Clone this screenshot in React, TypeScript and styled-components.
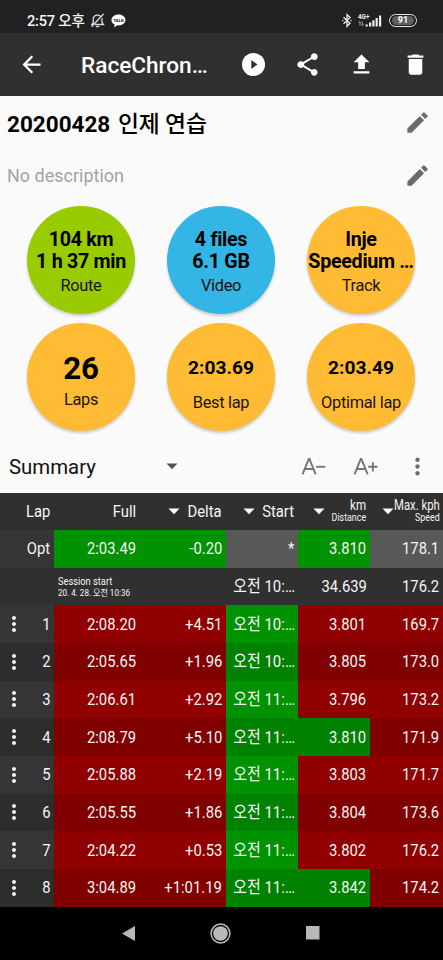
import React from 'react';
import styled, { createGlobalStyle } from 'styled-components';
import { MdArrowBack, MdShare, MdFileUpload, MdDelete, MdEdit, MdMoreVert } from 'react-icons/md';

const GlobalStyle = createGlobalStyle`
  * { box-sizing: border-box; }
  body {
    margin: 0;
    background: #000;
    font-family: Roboto, 'Noto Sans CJK KR', sans-serif;
  }
  svg { display: block; flex: none; }
`;

const Screen = styled.div`
  width: 443px;
  height: 960px;
  display: flex;
  flex-direction: column;
  overflow: hidden;
  background: #fafafa;
`;

const StatusBar = styled.header`
  height: 33px;
  flex: none;
  display: flex;
  align-items: center;
  justify-content: space-between;
  padding: 8px 26px 0 27px;
  background: #212121;
  color: #f4f4f4;
`;

const StatusGroup = styled.div<{ $gap: number }>`
  display: flex;
  align-items: center;
  gap: ${(p) => p.$gap}px;
`;

const Clock = styled.span`
  font-size: 14.6px;
  line-height: 20px;
  font-weight: 500;
  letter-spacing: -0.2px;
  white-space: nowrap;
`;

const Battery = styled.span`
  width: 28px;
  height: 12.5px;
  border: 1.3px solid #e8e8e8;
  border-radius: 7px;
  padding: 1px 2px;
  display: flex;
`;

const BatteryLevel = styled.span`
  flex: 1;
  border-radius: 5px;
  background: #606060;
  color: #fff;
  font-size: 9px;
  font-weight: 700;
  line-height: 8.6px;
  text-align: center;
`;

const AppBar = styled.nav`
  height: 63px;
  flex: none;
  display: flex;
  align-items: center;
  padding: 0 14px 0 18px;
  background: #303030;
  color: #fff;
`;

const AppTitle = styled.h1`
  flex: 1;
  margin: 2px 0 0 36px;
  font-size: 22.6px;
  line-height: 30px;
  font-weight: 500;
  white-space: nowrap;
`;

const Actions = styled.div`
  display: flex;
  gap: 27px;
`;

const Field = styled.div`
  height: 53px;
  flex: none;
  display: flex;
  align-items: center;
  justify-content: space-between;
  padding: 0 12px 0 7px;
  color: #6b6b6b;
`;

const SessionName = styled.h2`
  margin: 2px 0 0;
  font-size: 22.5px;
  line-height: 30px;
  font-weight: 700;
  color: #000;
  white-space: nowrap;
`;

const Korean = styled.span`
  font-family: 'Noto Sans CJK KR', sans-serif;
  font-weight: 500;
  font-size: 22.8px;
  margin-left: 2px;
`;

const Description = styled.span`
  margin-top: 1px;
  font-size: 18px;
  line-height: 24px;
  color: #a3a3a3;
`;

const Circles = styled.section`
  display: grid;
  grid-template-columns: repeat(3, 108px);
  grid-template-rows: repeat(2, 108px);
  gap: 9px 32px;
  padding: 4px 0 0 27px;
  height: 237px;
  flex: none;
`;

const Circle = styled.div<{ $color: string }>`
  width: 108px;
  height: 108px;
  border-radius: 50%;
  background: ${(p) => p.$color};
  box-shadow: 0 2px 3px rgba(0, 0, 0, 0.2);
  display: flex;
  flex-direction: column;
  align-items: center;
  color: #000;
  white-space: nowrap;
`;

const CircleValue = styled.div<{ $size: number; $top: number; $line: number; $track: number }>`
  margin-top: ${(p) => p.$top}px;
  font-size: ${(p) => p.$size}px;
  line-height: ${(p) => p.$line}px;
  letter-spacing: ${(p) => p.$track}px;
  font-weight: 700;
  text-align: center;
  white-space: pre;
`;

const CircleLabel = styled.div<{ $top: number }>`
  margin-top: ${(p) => p.$top}px;
  font-size: 16.4px;
  letter-spacing: -0.3px;
  line-height: 20px;
  color: #1c1408;
`;

const Toolbar = styled.div`
  height: 53.5px;
  flex: none;
  display: flex;
  align-items: center;
  padding: 2px 12px 0 9px;
  color: #6b6b6b;
`;

const Picker = styled.div`
  width: 169px;
  display: flex;
  align-items: center;
  justify-content: space-between;
  color: #111;
  font-size: 20.4px;
  line-height: 28px;
`;

const FontButtons = styled.div`
  flex: 1;
  display: flex;
  justify-content: flex-end;
  gap: 27px;
  margin-right: 26px;
`;

const Table = styled.main`
  flex: none;
  height: 414px;
  display: grid;
  grid-template-rows: repeat(11, 1fr);
  background: #303030;
  color: #f5f5f5;
`;

const Row = styled.div`
  display: grid;
  grid-template-columns: 54px 85.5px 86px 72.5px 72px 73px;
`;

const Cell = styled.div<{ $bg?: string }>`
  display: flex;
  align-items: center;
  justify-content: flex-end;
  padding-right: 3.5px;
  background: ${(p) => p.$bg ?? 'transparent'};
  min-width: 0;
`;

const LapCell = styled(Cell)`
  justify-content: space-between;
  padding-left: 2px;
`;

const Narrow = styled.span<{ $size?: number; $scale?: number }>`
  display: block;
  flex: none;
  font-size: ${(p) => p.$size ?? 17.2}px;
  line-height: 20px;
  margin-top: -1px;
  white-space: nowrap;
  transform: scaleX(${(p) => p.$scale ?? 0.86});
  transform-origin: right center;
`;

const SortableCell = styled(Cell)<{ $inset: number }>`
  justify-content: space-between;
  padding-left: ${(p) => p.$inset}px;
`;

const HeaderLabel = styled.div`
  flex: 1;
  min-width: 0;
  display: flex;
  justify-content: flex-end;
`;

const TwoLine = styled(HeaderLabel)`
  flex-direction: column;
  align-items: flex-end;
  & > span { margin: 0; }
  & > span:first-child { line-height: 13px; }
  & > span:last-child { line-height: 12px; }
`;

const SessionCell = styled(Cell)`
  grid-column: 2 / 4;
  flex-direction: column;
  align-items: flex-start;
  justify-content: center;
  padding-left: 4px;
  & > span {
    margin: 0;
    line-height: 11px;
    transform-origin: left center;
  }
`;

const NavBar = styled.footer`
  flex: 1;
  display: flex;
  align-items: center;
  justify-content: center;
  gap: 74.5px;
  padding-right: 2.5px;
  background: #000;
`;

const DropArrow = ({ color }: { color: string }) => (
  <svg width="12" height="7" viewBox="0 0 12 7"><path d="M.5.5h11L6 6.3z" fill={color} /></svg>
);

const BellOff = () => (
  <svg width="15" height="15" viewBox="0 0 15 15" fill="none" stroke="#ddd" strokeWidth="1.3" strokeLinecap="round">
    <path d="M3.2 10.2V6.5C3.2 3.8 5 2.2 7.5 2.2c1 0 2 .3 2.7.9M12 5.6v3.9l1.5 2H5.6M1.5 11.5l1.7-1.3M6.3 13.6h2.4M13.3 1.3 2 13.2" />
  </svg>
);

const Talk = () => (
  <svg width="15" height="14" viewBox="0 0 15 14">
    <path d="M7.5.5C3.6.5.5 2.9.5 6c0 2 1.3 3.7 3.2 4.6L3 13.4l3.3-2.1 1.2.1c3.9 0 7-2.4 7-5.4S11.4.5 7.5.5z" fill="#fff" />
    <text x="7.5" y="7.6" fontSize="4.2" fontWeight="900" textAnchor="middle" fill="#222">TALK</text>
  </svg>
);

const Bluetooth = () => (
  <svg width="10" height="15" viewBox="0 0 10 15" fill="none" stroke="#eee" strokeWidth="1.3">
    <path d="M1.5 4.2 8 10.3 5 13.4V1.6l3 3-6.5 6.1" />
    <path d="M.4 7.5h1M8.6 7.5h1" strokeWidth="1.5" />
  </svg>
);

const Signal = () => (
  <svg width="25" height="15" viewBox="0 0 25 15" fill="#eee">
    <text x="0" y="5.9" fontSize="6.3" fontWeight="700">4G+</text>
    <path d="M2 8.5v4M.8 9.7 2 8.5M4.2 8.5v4M5.4 11.3l-1.2 1.2" stroke="#ccc" strokeWidth=".8" />
    <path d="M7.5 11.5h2.3v2H7.5zM11 9.5h2.2v4H11zM14.3 7.3h2.2v6.2h-2.2zM17.6 5h2.2v8.5h-2.2zM21 2.5h2.2v11H21z" />
  </svg>
);

const PlayCircle = () => (
  <svg width="27" height="27" viewBox="0 0 27 27">
    <circle cx="13.5" cy="13.5" r="11.5" fill="#fff" />
    <path d="M11.3 8.9v9.2l6.2-4.6z" fill="#303030" />
  </svg>
);

const FontSizeIcon = ({ plus }: { plus?: boolean }) => (
  <svg width="25" height="20" viewBox="0 0 25 20" fill="none" stroke="#747474" strokeWidth="1.9">
    <path d="M1.5 17.3 7.8 2h.6l6.3 15.3M3.8 12h8.6" />
    <path d={plus ? 'M15.2 9.8h9.3M19.85 5.2v9.3' : 'M15.2 9.8h9'} />
  </svg>
);

const GREEN = ['#009200', '#008200'];
const RED = ['#900000', '#800000'];
const LAP_BG = ['#353535', '#2d2d2d'];

type Lap = { full: string; delta: string; start: string; km: string; speed: string; longest?: boolean };

const laps: Lap[] = [
  { full: '2:08.20', delta: '+4.51', start: '10', km: '3.801', speed: '169.7' },
  { full: '2:05.65', delta: '+1.96', start: '10', km: '3.805', speed: '173.0' },
  { full: '2:06.61', delta: '+2.92', start: '11', km: '3.796', speed: '173.2' },
  { full: '2:08.79', delta: '+5.10', start: '11', km: '3.810', speed: '171.9', longest: true },
  { full: '2:05.88', delta: '+2.19', start: '11', km: '3.803', speed: '171.7' },
  { full: '2:05.55', delta: '+1.86', start: '11', km: '3.804', speed: '173.6' },
  { full: '2:04.22', delta: '+0.53', start: '11', km: '3.802', speed: '176.2' },
  { full: '3:04.89', delta: '+1:01.19', start: '11', km: '3.842', speed: '174.2', longest: true },
];

const circles = [
  { color: '#99cc00', value: '104 km\n1 h 37 min', label: 'Route', size: 19.7, top: 22.6, line: 22, gap: 3.4, track: -0.3 },
  { color: '#33b5e5', value: '4 files\n6.1 GB', label: 'Video', size: 19.7, top: 22.6, line: 22, gap: 3.4, track: -0.3 },
  { color: '#ffbb33', value: 'Inje\nSpeedium …', label: 'Track', size: 19.7, top: 22.6, line: 22, gap: 3.4, track: -0.3 },
  { color: '#ffbb33', value: '26', label: 'Laps', size: 31.3, top: 30, line: 32, gap: 5, track: -0.3 },
  { color: '#ffbb33', value: '2:03.69', label: 'Best lap', size: 19.2, top: 32, line: 25, gap: 13, track: 0 },
  { color: '#ffbb33', value: '2:03.49', label: 'Optimal lap', size: 19.2, top: 32, line: 25, gap: 13, track: 0 },
];

const StartTime = ({ hour }: { hour: string }) => <Narrow $scale={0.87}>오전 {hour}:…</Narrow>;

export default function App() {
  return (
    <>
      <GlobalStyle />
      <Screen>
        <StatusBar>
          <StatusGroup $gap={5.5}>
            <Clock>2:57 오후</Clock>
            <BellOff />
            <Talk />
          </StatusGroup>
          <StatusGroup $gap={6}>
            <Bluetooth />
            <Signal />
            <Battery><BatteryLevel>91</BatteryLevel></Battery>
          </StatusGroup>
        </StatusBar>
        <AppBar>
          <MdArrowBack size={27} />
          <AppTitle>RaceChron…</AppTitle>
          <Actions>
            <PlayCircle />
            <MdShare size={27} />
            <MdFileUpload size={27} />
            <MdDelete size={27} />
          </Actions>
        </AppBar>
        <Field>
          <SessionName>20200428 <Korean>인제 연습</Korean></SessionName>
          <MdEdit size={27} />
        </Field>
        <Field>
          <Description>No description</Description>
          <MdEdit size={27} />
        </Field>
        <Circles>
          {circles.map((c) => (
            <Circle key={c.label} $color={c.color}>
              <CircleValue $size={c.size} $top={c.top} $line={c.line} $track={c.track}>{c.value}</CircleValue>
              <CircleLabel $top={c.gap}>{c.label}</CircleLabel>
            </Circle>
          ))}
        </Circles>
        <Toolbar>
          <Picker>Summary<DropArrow color="#555" /></Picker>
          <FontButtons>
            <FontSizeIcon />
            <FontSizeIcon plus />
          </FontButtons>
          <MdMoreVert size={27} />
        </Toolbar>
        <Table>
          <Row>
            <Cell><Narrow>Lap</Narrow></Cell>
            <Cell><Narrow>Full</Narrow></Cell>
            <SortableCell $inset={28.5}>
              <DropArrow color="#fff" />
              <HeaderLabel><Narrow>Delta</Narrow></HeaderLabel>
            </SortableCell>
            <SortableCell $inset={17}>
              <DropArrow color="#fff" />
              <HeaderLabel><Narrow>Start</Narrow></HeaderLabel>
            </SortableCell>
            <SortableCell $inset={14.5}>
              <DropArrow color="#fff" />
              <TwoLine><Narrow $size={13.8} $scale={0.84}>km</Narrow><Narrow $size={10.3}>Distance</Narrow></TwoLine>
            </SortableCell>
            <SortableCell $inset={12}>
              <DropArrow color="#fff" />
              <TwoLine><Narrow $size={13.8} $scale={0.82}>Max. kph</Narrow><Narrow $size={10.3}>Speed</Narrow></TwoLine>
            </SortableCell>
          </Row>
          <Row>
            <Cell $bg={LAP_BG[0]}><Narrow>Opt</Narrow></Cell>
            <Cell $bg={GREEN[0]}><Narrow>2:03.49</Narrow></Cell>
            <Cell $bg={GREEN[0]}><Narrow>-0.20</Narrow></Cell>
            <Cell $bg="#585858"><Narrow>*</Narrow></Cell>
            <Cell $bg={GREEN[0]}><Narrow>3.810</Narrow></Cell>
            <Cell $bg="#585858"><Narrow>178.1</Narrow></Cell>
          </Row>
          <Row>
            <Cell />
            <SessionCell>
              <Narrow $size={10.8}>Session start</Narrow>
              <Narrow $size={9.4}>20. 4. 28. 오전 10:36</Narrow>
            </SessionCell>
            <Cell><StartTime hour="10" /></Cell>
            <Cell><Narrow>34.639</Narrow></Cell>
            <Cell><Narrow>176.2</Narrow></Cell>
          </Row>
          {laps.map((lap, i) => {
            const s = i % 2;
            return (
              <Row key={lap.full}>
                <LapCell $bg={LAP_BG[s]}><MdMoreVert size={24} /><Narrow>{i + 1}</Narrow></LapCell>
                <Cell $bg={RED[s]}><Narrow>{lap.full}</Narrow></Cell>
                <Cell $bg={RED[s]}><Narrow>{lap.delta}</Narrow></Cell>
                <Cell $bg={GREEN[s]}><StartTime hour={lap.start} /></Cell>
                <Cell $bg={lap.longest ? GREEN[s] : RED[s]}><Narrow>{lap.km}</Narrow></Cell>
                <Cell $bg={RED[s]}><Narrow>{lap.speed}</Narrow></Cell>
              </Row>
            );
          })}
        </Table>
        <NavBar>
          <svg width="15" height="17" viewBox="0 0 15 17"><path d="M14 1v15L1 8.5z" fill="#b8b8b8" /></svg>
          <svg width="21" height="21" viewBox="0 0 21 21">
            <circle cx="10.5" cy="10.5" r="9.4" fill="none" stroke="#b8b8b8" strokeWidth="1.5" />
            <circle cx="10.5" cy="10.5" r="7.3" fill="#b8b8b8" />
          </svg>
          <svg width="14" height="14" viewBox="0 0 14 14"><rect width="13.5" height="13.5" fill="#b8b8b8" /></svg>
        </NavBar>
      </Screen>
    </>
  );
}
